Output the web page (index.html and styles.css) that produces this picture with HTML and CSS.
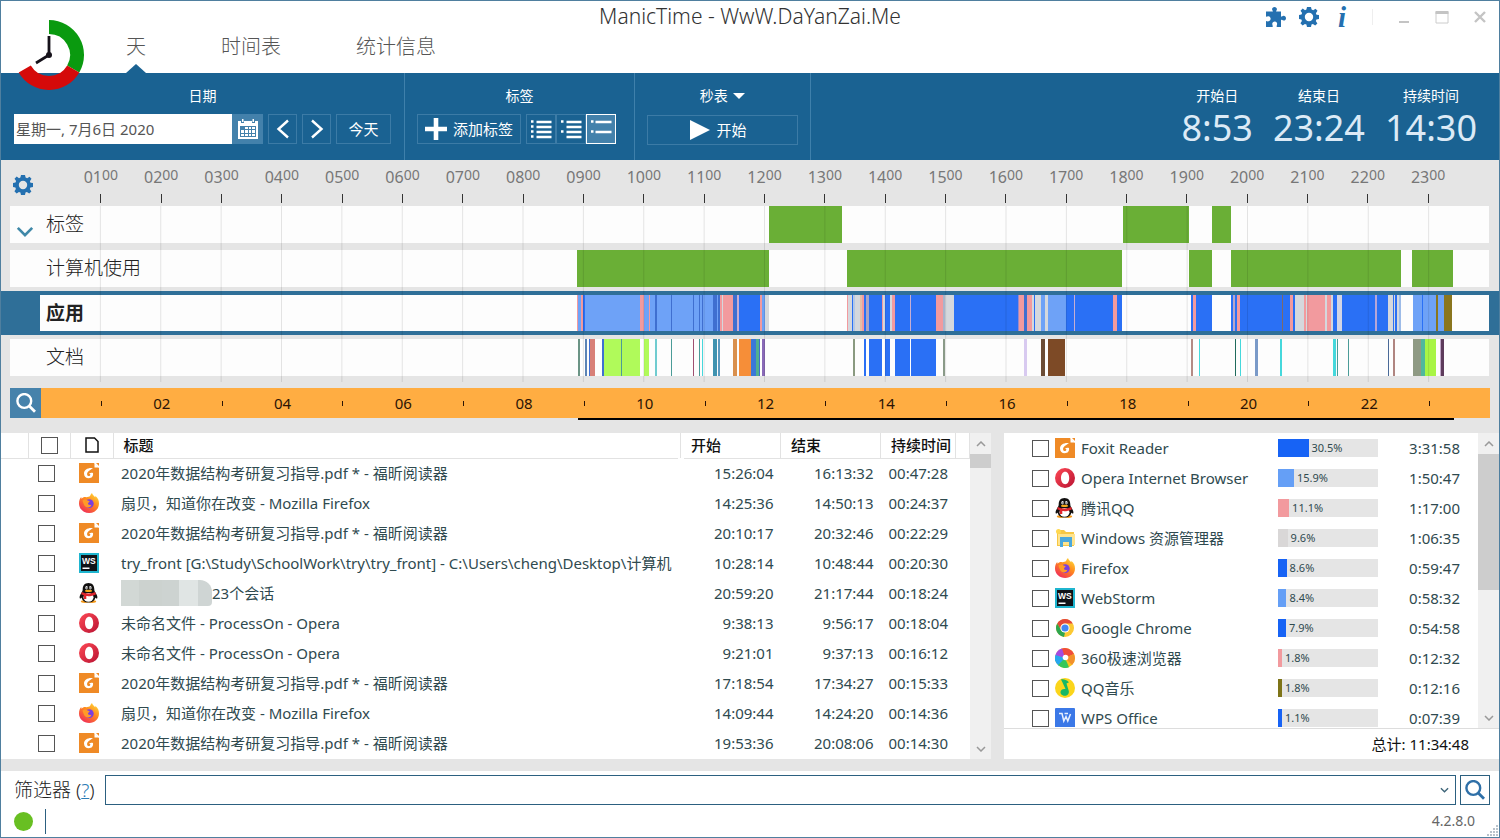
FILE: index.html
```html
<!DOCTYPE html>
<html lang="zh-CN">
<head>
<meta charset="utf-8">
<title>ManicTime</title>
<link rel="stylesheet" href="styles.css">
</head>
<body>
<svg class="defs" aria-hidden="true">
  <linearGradient id="g-opera" x1="0" y1="0" x2="1" y2="1"><stop offset="0" stop-color="#ff4a55"/><stop offset="1" stop-color="#b81232"/></linearGradient>
  <linearGradient id="g-fox" x1=".9" y1="0" x2=".2" y2="1"><stop offset="0" stop-color="#ffe03a"/><stop offset=".45" stop-color="#ff8a1e"/><stop offset="1" stop-color="#f0285c"/></linearGradient>
  <symbol id="i-gear" viewBox="0 0 20 20"><path fill="currentColor" fill-rule="evenodd" d="M8 0h4l.6 2.6 1.6.7L16.500 1.800l2 2-1.600 2.500.6 1.400L20 8v4l-2.600.6-.6 1.500 1.600 2.300-2.200 2.200-2.300-1.500-1.400.5L12 20H8l-.6-2.500-1.500-.6-2.300 1.600-2.200-2.200 1.500-2.300-.5-1.400L0 12V8l2.500-.5.600-1.400L1.500 3.800l2.200-2.200L6 3.200l1.400-.6zM10 5.800a4.200 4.200 0 1 0 0 8.400 4.200 4.200 0 0 0 0-8.400z"/></symbol>
  <symbol id="i-puzzle" viewBox="0 0 20 20"><path fill="currentColor" d="M0 4.500h6.500c.4 0 .5-.4.200-.8C5.300 2 6.500 0 8.500 0s3.200 2 1.800 3.700c-.3.400-.2.800.2.800H15v4.600c0 .5.4.7.900.4C17.600 8 20 9 20 11.200s-2.400 3-4.100 1.600c-.5-.3-.9-.1-.9.400V20h-4.300c0-1-.1-1.600.3-2.300.5-1.700-.4-3.200-2.200-3.200s-3 1.500-2.400 3.200c.3.700.3 1.300.3 2.300H0v-6c.9.200 1.700.6 2.700.3 2.700-.8 2.500-4.600-.2-5C1.500 9.200 1 9.600 0 9.700z"/></symbol>
  <symbol id="i-search" viewBox="0 0 20 20"><circle cx="8.300" cy="8" r="6.900" fill="none" stroke="currentColor" stroke-width="2.400"/><path d="M13 12.800l6 6" stroke="currentColor" stroke-width="2.900"/></symbol>
  <symbol id="i-chev" viewBox="0 0 10 6"><path d="M1 1l4 4 4-4" fill="none" stroke="currentColor" stroke-width="1.500"/></symbol>
  <symbol id="foxit" viewBox="0 0 20 20"><path fill="#ef8a26" d="M0 0h15l5 5v15H0z"/><path fill="#fff" d="M15.500 0v4.500H20L15.500 0z"/><path fill="#ef8a26" d="M17 0h3v3z"/><path fill="#fff" d="M14 5C9 4.400 5 6.500 5 10.500c0 3 2 4.700 4.700 4.700 3.200 0 4.800-2 4.300-5.200-1.600-.3-2.800-.2-4 .4.800.1 1.400.500 1.300 1.300-.1 1-1 1.500-1.900 1.300-1-.2-1.400-1.200-1.300-2.200C8.300 8.300 11.200 7.300 14 5z"/></symbol>
  <symbol id="opera" viewBox="0 0 20 20"><path fill="url(#g-opera)" fill-rule="evenodd" d="M10 0a10 10 0 1 0 0 20 10 10 0 0 0 0-20zm.2 3.800c2.400 0 4 2.600 4 6.200s-1.600 6.200-4 6.200-4.200-2.600-4.200-6.200 1.800-6.200 4.200-6.200z"/></symbol>
  <symbol id="firefox" viewBox="0 0 20 20"><path fill="url(#g-fox)" d="M13 0c.4 2 2 2.800 3.200 4.300.3-.6.200-1.100 0-1.600C19 4.800 20 7.500 20 10.500 20 16 15.700 20 10.200 20S0 16 0 10.500c0-2.600.8-5 2.200-6.500l.4 1.700C3.700 4.300 5.600 3.700 7.200 4.200 8.800 4 10.500 3.800 11 3c.5-1 .9-2 2-3z"/><circle cx="10.300" cy="10.600" r="4.400" fill="#7a3fe0"/><path fill="#ff9a28" d="M3.500 7.500c2-1.800 4-1 5.500.2l1.600.4c-.2 1.300-1.100 1.500-1.600 2.200-.2 1.600 1.500 2 3.400 1.400-.4 2.400-3.200 3.300-5.300 2.300C5 13 4.300 10 3.500 7.500z"/></symbol>
  <symbol id="webstorm" viewBox="0 0 20 20"><path fill="#1fb5cf" d="M0 0h20v20H0z"/><path fill="#101318" d="M2 2h16v16H2z"/><text x="3" y="10.500" font-size="8.500" font-weight="700" font-family="Liberation Sans" fill="#fff">WS</text><path fill="#fff" d="M3.500 14.500h7V16h-7z"/></symbol>
  <symbol id="qq" viewBox="0 0 20 20"><ellipse cx="5.800" cy="18.600" rx="4" ry="1.400" fill="#f59a1b"/><ellipse cx="13.200" cy="18.600" rx="4" ry="1.400" fill="#f59a1b"/><path fill="#12100f" d="M9.500 0c4 0 5.800 2.800 5.800 6.200 0 1.500.4 2.300 1.500 4 1.500 2.300 2 4 1.300 5.200-.5.600-1.300-.4-1.700-1-.7 3.200-3 5-6.900 5s-6.200-1.800-6.900-5c-.4.600-1.200 1.600-1.700 1-.7-1.200-.2-2.900 1.300-5.200 1.100-1.700 1.500-2.500 1.500-4C3.700 2.800 5.500 0 9.500 0z"/><ellipse cx="9.500" cy="14.300" rx="5" ry="4.400" fill="#fff"/><path fill="#e0252d" d="M2.800 9c4.400 2 9 2 13.400 0l.8 2.200c-3.200 1.800-6.500 2.200-9.700 1.900v3H4.800v-3.900l-2.600-1z"/><ellipse cx="7.600" cy="4.800" rx="1.300" ry="1.800" fill="#fff"/><ellipse cx="11.300" cy="4.800" rx="1.300" ry="1.800" fill="#fff"/><circle cx="8" cy="5" r=".7"/><circle cx="11" cy="5" r=".7"/><ellipse cx="9.500" cy="7.900" rx="3.500" ry="1.100" fill="#f5a81b"/></symbol>
  <symbol id="explorer" viewBox="0 0 20 20"><path fill="#f6c744" d="M2 2h7l2 2h8v14H2z"/><path fill="#ffe48e" d="M3 6h17v11H3z"/><path fill="#4ba8dc" d="M5 9h12v10h-3v-5H8v5H5z"/><circle cx="3.500" cy="3.500" r="2.500" fill="#ffd84f"/></symbol>
  <symbol id="chrome" viewBox="0 0 20 20"><circle cx="10" cy="10" r="9" fill="#fcc934"/><path fill="#e4483b" d="M2.200 5.500a9 9 0 0 1 15.600 0H10a4.500 4.500 0 0 0-4 6.600z"/><path fill="#2da64f" d="M2.200 5.500L6 12.100c.8 1.400 2.200 2.400 4 2.400l-1 4.400A9 9 0 0 1 2.200 5.500z"/><circle cx="10" cy="10" r="4.600" fill="#fff"/><circle cx="10" cy="10" r="3.600" fill="#4387f4"/></symbol>
  <symbol id="b360" viewBox="0 0 20 20"><circle cx="10" cy="10" r="10" fill="#f9c31c"/><path fill="#f04c3c" d="M10 10L6 .9A10 10 0 0 1 19 6z"/><path fill="#f2902c" d="M10 10l9-4a10 10 0 0 1-2 11z"/><path fill="#a44be0" d="M10 10L.3 7.500A10 10 0 0 1 7 .500z"/><path fill="#26a7ef" d="M10 10l-6 8A10 10 0 0 1 .4 7z"/><path fill="#35c75a" d="M10 10l4 9.200A10 10 0 0 1 3.200 17z"/><circle cx="10.500" cy="9.500" r="2.800" fill="#fff"/></symbol>
  <symbol id="qqmusic" viewBox="0 0 20 20"><circle cx="10" cy="10" r="10" fill="#fbd51b"/><path fill="#15b866" d="M6 1.500c2.500-.5 5 0 8 2.800L11.500 5.500l2.300 7.500c.5 3-1.500 4.800-4 4.800S5.300 16 5.500 14c.3-2.200 2.300-3.500 5-3L7.500 4.500z"/></symbol>
  <symbol id="wps" viewBox="0 0 20 20"><path fill="#3b78e7" d="M0 1a1 1 0 0 1 1-1h18a1 1 0 0 1 1 1v19H0z"/><path d="M4 5.500h3L8.800 13l2.200-4.500L12.800 13l2.700-7M9.500 5.500H13" fill="none" stroke="#e8f0ff" stroke-width="1.500"/></symbol>
</svg>

<div class="app">
  <header class="header">
    <svg class="logo" viewBox="0 0 70 70" aria-label="ManicTime"><path d="M35 7a28 28 0 0 1 24.250 42" fill="none" stroke="#0a9a0f" stroke-width="14"/><path d="M59.250 49A28 28 0 0 1 10.750 49" fill="none" stroke="#d50a0a" stroke-width="14"/><path d="M35 16v19L22 43" fill="none" stroke="#16121a" stroke-width="2.800"/><circle cx="35" cy="35" r="3" fill="#16121a"/></svg>
    <nav class="tabs">
      <a class="tab tab-active" href="#day">天</a>
      <a class="tab" href="#timesheet">时间表</a>
      <a class="tab" href="#stats">统计信息</a>
    </nav>
    <h1 class="title">ManicTime - WwW.DaYanZai.Me</h1>
    <div class="winbar">
      <button class="ib" aria-label="插件"><svg><use href="#i-puzzle"/></svg></button>
      <button class="ib" aria-label="设置"><svg><use href="#i-gear"/></svg></button>
      <button class="ib info" aria-label="关于">i</button>
      <span class="sep"></span>
      <button class="wb" aria-label="最小化"><svg viewBox="0 0 14 14"><path d="M2 12h10" stroke="#c4c4c4" stroke-width="2"/></svg></button>
      <button class="wb" aria-label="最大化"><svg viewBox="0 0 14 14"><path d="M1 2v11h12V2" fill="none" stroke="#ccc"/><path d="M.5 2.500h13" stroke="#c4c4c4" stroke-width="3"/></svg></button>
      <button class="wb" aria-label="关闭"><svg viewBox="0 0 14 14"><path d="M2 2l10 10M12 2L2 12" stroke="#c4c4c4" stroke-width="2.400"/></svg></button>
    </div>
  </header>

  <section class="toolbar">
    <div class="group group-date">
      <label class="gl" for="date">日期</label>
      <div class="controls">
        <div class="datebox"><input id="date" type="text" value="星期一, 7月6日 2020"><button class="cal" aria-label="日历"><svg viewBox="0 0 20 20"><path fill="#fff" fill-rule="evenodd" d="M0 2h3v2h3V2h8v2h3V2h3v18H0zm2 5v11h16V7z"/><path fill="#fff" d="M4 0h1.500v3H4zM14.500 0H16v3h-1.500zM7 8h3v2H7zm4 0h2v2h-2zm3 0h3v2h-3zM3 11h3v3H3zm4 0h3v3H7zm4 0h2v3h-2zm3 0h3v3h-3zM3 15h3v2H3zm4 0h3v2H7zm4 0h2v2h-2zm3 0h3v2h-3z"/></svg></button></div>
        <button class="tb sq" aria-label="前一天"><svg viewBox="0 0 14 20"><path d="M12 1.500L2.500 10l9.500 8.500" fill="none" stroke="#fff" stroke-width="2.400"/></svg></button>
        <button class="tb sq" aria-label="后一天"><svg viewBox="0 0 14 20"><path d="M2 1.500l9.500 8.500L2 18.500" fill="none" stroke="#fff" stroke-width="2.400"/></svg></button>
        <button class="tb today">今天</button>
      </div>
    </div>
    <div class="group group-tags">
      <span class="gl">标签</span>
      <div class="controls">
        <button class="tb add"><svg viewBox="0 0 22 22"><path d="M11 0v22M0 11h22" stroke="#fff" stroke-width="4.600"/></svg>添加标签</button>
        <div class="views">
          <button class="tb" aria-label="详细"><svg viewBox="0 0 20 20"><path d="M5.500 3h15M5.500 8h15M5.500 13h15M5.500 18h15M0 2.500h2.500M0 7.500h2.500M0 12.500h2.500M0 17.500h2.500" stroke="#fff" stroke-width="2.400"/></svg></button>
          <button class="tb" aria-label="紧凑"><svg viewBox="0 0 20 20"><path d="M5.500 3h15M5.500 8h15M5.500 13h15M5.500 18h15M0 2.500h2.500M0 12.500h2.500" stroke="#fff" stroke-width="2.400"/></svg></button>
          <button class="tb view-on" aria-label="列表"><svg viewBox="0 0 20 20"><path d="M4.500 3h16M4.500 13h16M0 2.500h2.500M0 12.500h2.500" stroke="#fff" stroke-width="2.400"/></svg></button>
        </div>
      </div>
    </div>
    <div class="group group-watch">
      <span class="gl">秒表 <svg class="caret" viewBox="0 0 12 6"><path d="M0 0h12L6 6z" fill="#fff"/></svg></span>
      <div class="controls"><button class="tb start"><svg viewBox="0 0 20 20"><path d="M0 0l20 10L0 20z" fill="#fff"/></svg>开始</button></div>
    </div>
    <dl class="stats">
      <div><dt>开始日</dt><dd>8:53</dd></div>
      <div><dt>结束日</dt><dd>23:24</dd></div>
      <div><dt>持续时间</dt><dd>14:30</dd></div>
    </dl>
  </section>

  <section class="timeline">
    <div class="ruler">
      <button class="ib" aria-label="时间线设置"><svg><use href="#i-gear"/></svg></button>
      <div class="hours" id="hours"></div>
    </div>
    <div class="tracks">
      <div class="track"><div class="lane"><svg class="chart" id="c-tags"></svg><span class="lane-label"><svg class="expand"><use href="#i-chev"/></svg>标签</span></div></div>
      <div class="track"><div class="lane"><svg class="chart" id="c-usage"></svg><span class="lane-label">计算机使用</span></div></div>
      <div class="track track-on"><div class="lane"><svg class="chart" id="c-apps"></svg><span class="lane-label">应用</span></div></div>
      <div class="track"><div class="lane"><svg class="chart" id="c-docs"></svg><span class="lane-label">文档</span></div></div>
      <svg class="grid" id="grid"></svg>
    </div>
    <div class="overview">
      <button class="ov-search" aria-label="缩放"><svg><use href="#i-search"/></svg></button>
      <div class="ov-bar"><div class="ov-hours" id="ov-hours"></div><svg class="ov-line" viewBox="0 0 1449 2" preserveAspectRatio="none"><path d="M537 0h876v2H537z"/></svg></div>
    </div>
  </section>

  <main class="panels">
    <section class="panel details">
      <table class="events">
        <colgroup><col class="c0"><col class="c1"><col class="c2"><col><col class="c4"><col class="c4"><col class="c6"><col class="c7"></colgroup>
        <thead><tr><th></th><th class="hc"><input type="checkbox" aria-label="全选"></th><th class="hc"><svg class="page" viewBox="0 0 14 16"><path d="M1 1h8.500L13 4.500V15H1z" fill="none" stroke="#111" stroke-width="1.500"/></svg></th><th>标题</th><th>开始</th><th>结束</th><th>持续时间</th><th></th></tr></thead>
        <tbody>
          <tr><td></td><td><input type="checkbox" aria-label="选择"></td><td class="ic"><svg><use href="#foxit"/></svg></td><td>2020年数据结构考研复习指导.pdf * - 福昕阅读器</td><td>15:26:04</td><td>16:13:32</td><td>00:47:28</td><td></td></tr>
          <tr><td></td><td><input type="checkbox" aria-label="选择"></td><td class="ic"><svg><use href="#firefox"/></svg></td><td>扇贝，知道你在改变 - Mozilla Firefox</td><td>14:25:36</td><td>14:50:13</td><td>00:24:37</td><td></td></tr>
          <tr><td></td><td><input type="checkbox" aria-label="选择"></td><td class="ic"><svg><use href="#foxit"/></svg></td><td>2020年数据结构考研复习指导.pdf * - 福昕阅读器</td><td>20:10:17</td><td>20:32:46</td><td>00:22:29</td><td></td></tr>
          <tr><td></td><td><input type="checkbox" aria-label="选择"></td><td class="ic"><svg><use href="#webstorm"/></svg></td><td>try_front [G:\Study\SchoolWork\try\try_front] - C:\Users\cheng\Desktop\计算机</td><td>10:28:14</td><td>10:48:44</td><td>00:20:30</td><td></td></tr>
          <tr><td></td><td><input type="checkbox" aria-label="选择"></td><td class="ic"><svg><use href="#qq"/></svg></td><td><span class="masked"></span>23个会话</td><td>20:59:20</td><td>21:17:44</td><td>00:18:24</td><td></td></tr>
          <tr><td></td><td><input type="checkbox" aria-label="选择"></td><td class="ic"><svg><use href="#opera"/></svg></td><td>未命名文件 - ProcessOn - Opera</td><td>9:38:13</td><td>9:56:17</td><td>00:18:04</td><td></td></tr>
          <tr><td></td><td><input type="checkbox" aria-label="选择"></td><td class="ic"><svg><use href="#opera"/></svg></td><td>未命名文件 - ProcessOn - Opera</td><td>9:21:01</td><td>9:37:13</td><td>00:16:12</td><td></td></tr>
          <tr><td></td><td><input type="checkbox" aria-label="选择"></td><td class="ic"><svg><use href="#foxit"/></svg></td><td>2020年数据结构考研复习指导.pdf * - 福昕阅读器</td><td>17:18:54</td><td>17:34:27</td><td>00:15:33</td><td></td></tr>
          <tr><td></td><td><input type="checkbox" aria-label="选择"></td><td class="ic"><svg><use href="#firefox"/></svg></td><td>扇贝，知道你在改变 - Mozilla Firefox</td><td>14:09:44</td><td>14:24:20</td><td>00:14:36</td><td></td></tr>
          <tr><td></td><td><input type="checkbox" aria-label="选择"></td><td class="ic"><svg><use href="#foxit"/></svg></td><td>2020年数据结构考研复习指导.pdf * - 福昕阅读器</td><td>19:53:36</td><td>20:08:06</td><td>00:14:30</td><td></td></tr>
        </tbody>
      </table>
      <div class="scroll"><svg class="up"><use href="#i-chev"/></svg><div class="rail"><div class="thumb thumb-s"></div></div><svg><use href="#i-chev"/></svg></div>
    </section>

    <section class="panel summary">
      <div class="list-wrap">
        <ul class="apps">
          <li><label><input type="checkbox"><svg><use href="#foxit"/></svg>Foxit Reader</label><span class="bar"><i class="f-blue" style="width:30.5%"></i>30.5%</span><time>3:31:58</time></li>
          <li><label><input type="checkbox"><svg><use href="#opera"/></svg>Opera Internet Browser</label><span class="bar"><i class="f-sky" style="width:15.9%"></i>15.9%</span><time>1:50:47</time></li>
          <li><label><input type="checkbox"><svg><use href="#qq"/></svg>腾讯QQ</label><span class="bar"><i class="f-pink" style="width:11.1%"></i>11.1%</span><time>1:17:00</time></li>
          <li><label><input type="checkbox"><svg><use href="#explorer"/></svg>Windows 资源管理器</label><span class="bar"><i class="f-grey" style="width:9.6%"></i>9.6%</span><time>1:06:35</time></li>
          <li><label><input type="checkbox"><svg><use href="#firefox"/></svg>Firefox</label><span class="bar"><i class="f-blue" style="width:8.6%"></i>8.6%</span><time>0:59:47</time></li>
          <li><label><input type="checkbox"><svg><use href="#webstorm"/></svg>WebStorm</label><span class="bar"><i class="f-sky" style="width:8.4%"></i>8.4%</span><time>0:58:32</time></li>
          <li><label><input type="checkbox"><svg><use href="#chrome"/></svg>Google Chrome</label><span class="bar"><i class="f-blue" style="width:7.9%"></i>7.9%</span><time>0:54:58</time></li>
          <li><label><input type="checkbox"><svg><use href="#b360"/></svg>360极速浏览器</label><span class="bar"><i class="f-pink" style="width:1.8%"></i>1.8%</span><time>0:12:32</time></li>
          <li><label><input type="checkbox"><svg><use href="#qqmusic"/></svg>QQ音乐</label><span class="bar"><i class="f-olive" style="width:1.8%"></i>1.8%</span><time>0:12:16</time></li>
          <li><label><input type="checkbox"><svg><use href="#wps"/></svg>WPS Office</label><span class="bar"><i class="f-blue" style="width:1.1%"></i>1.1%</span><time>0:07:39</time></li>
        </ul>
        <div class="scroll"><svg class="up"><use href="#i-chev"/></svg><div class="rail"><div class="thumb thumb-l"></div></div><svg><use href="#i-chev"/></svg></div>
      </div>
      <p class="total">总计: 11:34:48</p>
    </section>
  </main>

  <form class="filter">
    <span class="filter-label"><label for="filter">筛选器</label> (<a href="#help">?</a>)</span>
    <div class="combo"><select id="filter"><option></option></select><svg><use href="#i-chev"/></svg></div>
    <button class="find" type="button" aria-label="搜索"><svg><use href="#i-search"/></svg></button>
  </form>
  <footer class="status">
    <span class="dot"></span><span class="bar-line"></span><span class="version">4.2.8.0</span>
    <svg class="grip" viewBox="0 0 12 12"><path d="M9 1h2M6 4h2M9 4h2M3 7h2M6 7h2M9 7h2M0 10h2M3 10h2M6 10h2M9 10h2" stroke="#b9c3cc" stroke-width="2"/></svg>
  </footer>
</div>
<script src="script.js"></script>
</body>
</html>
```
FILE: styles.css
```css
* { box-sizing: border-box; }
body {
  margin: 0;
  font: 15px/20px "Noto Sans", "Noto Sans CJK SC", sans-serif;
  color: #2f4a4f;
  background: #fff;
}
button, input, select { font: inherit; color: inherit; margin: 0; padding: 0; border: 0; background: none; border-radius: 0; }
h1, p, dl, dd, ul { margin: 0; padding: 0; }
.defs { position: absolute; width: 0; height: 0; visibility: hidden; }
.app { min-height: 100vh; border: 1px solid #4f7f9f; display: flex; flex-direction: column; }

input[type="checkbox"] { appearance: none; width: 17px; height: 17px; border: 1px solid #555; background: #fff; display: block; flex: none; }

/* header */
.header { position: relative; height: 72px; display: grid; grid-template-columns: 1fr auto 1fr; flex: none; }
.logo { position: absolute; left: 13px; top: 19px; width: 70px; height: 70px; z-index: 2; }
.tabs { display: flex; gap: 75px; padding: 31px 0 0 125px; align-items: stretch; }
.tab { color: #555; font-size: 20px; line-height: 30px; font-weight: 300; text-decoration: none; white-space: nowrap; display: flex; flex-direction: column; align-items: center; justify-content: space-between; }
.tab-active::after { content: ""; border: 10px solid transparent; border-top: 0; border-bottom: 9px solid #1a6292; }
.title { font-size: 21px; line-height: 24px; font-weight: 300; color: #333; padding-top: 3px; }
.winbar { display: flex; justify-content: flex-end; align-items: center; height: 32px; padding-right: 12px; }
.ib { color: #2470b0; width: 20px; height: 20px; }
.ib svg { width: 20px; height: 20px; display: block; }
.winbar .ib { margin-right: 13px; }
.info { font: italic 700 29px/20px "Liberation Serif", serif; }
.sep { width: 1px; height: 16px; background: #eee; margin: 0 24px 0 7px; }
.wb { width: 14px; height: 14px; margin-left: 24px; }
.sep + .wb { margin-left: 0; }
.wb svg { display: block; width: 14px; height: 14px; }

/* toolbar */
.toolbar { background: #1a6292; color: #fff; display: flex; height: 87px; flex: none; }
.group { border-right: 1px solid #3f80ab; padding: 13px 12px 0 12px; }
.group-date { width: 404px; padding: 13px 13px 0 13px; }
.group-tags { width: 230px; }
.group-watch { width: 176px; }
.gl { display: block; text-align: center; font-size: 14px; line-height: 20px; }
.caret { width: 12px; height: 6px; margin: 0 0 2px 2px; }
.controls { display: flex; gap: 5px; margin-top: 8px; height: 30px; }
.group-watch .controls { margin-top: 9px; }
.datebox { display: flex; flex: 1; min-width: 0; }
.datebox input { flex: 1; min-width: 0; background: #fff; color: #555; padding-left: 2px; }
.cal { width: 31px; background: #4381ab; display: grid; place-items: center; flex: none; }
.cal svg { width: 20px; height: 20px; }
.tb { border: 1px solid #3c7ba6; color: #fff; display: flex; align-items: center; justify-content: center; flex: none; }
.sq { width: 29px; }
.sq svg { width: 14px; height: 20px; }
.today { width: 55px; }
.add { width: 104px; gap: 6px; white-space: nowrap; }
.add svg { width: 22px; height: 22px; flex: none; }
.views { display: flex; }
.views .tb { width: 30px; }
.views svg { width: 20px; height: 20px; overflow: visible; }
.views .view-on { background: #4381ab; border-color: #fff; }
.start { flex: 1; gap: 6px; padding-right: 8px; }
.start svg { width: 20px; height: 20px; }
.stats { margin-left: auto; padding: 13px 22px 0 0; display: flex; gap: 20px; text-align: center; }
.stats dt { font-size: 14px; line-height: 20px; }
.stats dd { font-size: 36px; line-height: 44px; color: #dceaf6; }

/* timeline */
.timeline { background: #e5e5e5; flex: none; height: 273px; display: flex; flex-direction: column; }
.ruler { display: flex; height: 46px; padding: 0 10px 0 12px; }
.ruler .ib { margin: 15px 7px 0 0; }
.hours, .ov-hours { flex: 1; display: grid; grid-template-columns: repeat(23, 1fr); padding: 0 2.083%; }
.hour { display: flex; flex-direction: column; align-items: center; color: #777; font-size: 16px; padding-top: 7px; }
.hour span { white-space: nowrap; }
.hour sup { font-size: 14px; line-height: 0; vertical-align: 3px; }
.hour::after { content: ""; width: 1px; height: 9px; background: #333; margin-top: 7px; }
.tracks { position: relative; display: flex; flex-direction: column; gap: 7px; padding-bottom: 6px; }
.track { padding: 0 10px 0 9px; }
.lane { background: #fdfdfd; height: 37px; display: grid; }
.track-on { background: #2f6f98; padding: 4px 10px 4px 39px; margin: -3px 0; }
.track-on .lane { height: 36px; }
.chart, .lane-label { grid-area: 1 / 1; }
.chart { width: calc(100% - 30px); height: 100%; margin-left: 30px; display: block; }
.lane-label { color: #222; font-size: 19px; line-height: 36px; font-weight: 300; padding-left: 36px; position: relative; }
.track-on .lane-label { padding-left: 6px; font-weight: 700; }
.track-on .chart { width: 100%; margin-left: 0; }
.expand { position: absolute; left: 6px; top: 20px; width: 18px; height: 11px; color: #3f88a8; }
.grid { position: absolute; left: 39px; top: 0; width: calc(100% - 49px); height: 100%; pointer-events: none; }
.overview { display: flex; padding: 0 9px; margin-top: 6px; }
.ov-search { width: 31px; height: 30px; background: #4682ab; color: #fff; display: grid; place-items: center; }
.ov-search svg { width: 20px; height: 20px; }
.ov-bar { flex: 1; }
.ov-hours { background: #ffad42; height: 30px; align-items: center; justify-items: center; color: #2b1405; }
.ov-hours i { width: 1px; height: 5px; background: #2b1405; }
.ov-line { display: block; width: 100%; height: 2px; }

/* panels */
.panels { display: flex; gap: 13px; background: #e5e5e5; padding-bottom: 12px; flex: 1; }
.panel { background: #fff; display: flex; min-width: 0; }
.details { flex: 2; }
.events { flex: 1; min-width: 0; table-layout: fixed; border-collapse: collapse; width: 100%; align-self: flex-start; }
.c0 { width: 27px; } .c1 { width: 42px; } .c2 { width: 43px; } .c4 { width: 100px; } .c6 { width: 75px; } .c7 { width: 14px; }
.events th { height: 25px; padding: 0 0 0 10px; text-align: left; color: #111; font-weight: 500; font-size: 15px; border-right: 1px solid #e2e2e2; border-bottom: 1px solid #e2e2e2; white-space: nowrap; }
.events th:first-child, .events th:last-child { padding: 0; }
.events .hc { padding: 0; }
.hc input, .page { margin: 0 auto; display: block; }
.page { width: 14px; height: 16px; }
.events td { height: 30px; padding: 0 0 0 8px; white-space: nowrap; overflow: hidden; }
.events td:first-child { padding: 0; }
.events td:nth-child(2) { padding-left: 10px; }
.events td:nth-child(3) { padding-left: 9px; }
.events td:nth-child(4) { text-overflow: clip; border-right: 6px solid transparent; }
.events td:nth-child(5), .events td:nth-child(6) { text-align: right; padding-right: 7px; }
.events td:nth-child(8) { padding: 0; }
.ic svg { display: block; width: 20px; height: 20px; }
.masked { display: inline-block; width: 91px; height: 26px; margin: -8px 0 -4px; vertical-align: middle; border-radius: 0 12px 4px 0; background: linear-gradient(90deg, #d2d8d5 0 20%, #ccd2cf 20% 45%, #cdd3d1 45% 64%, #e0e5e4 64% 85%, #cfd5d4 85%); }
.scroll { width: 21px; background: #f0f0f0; display: flex; flex-direction: column; align-items: center; padding: 8px 0 7px; color: #999; flex: none; }
.scroll > svg { width: 10px; height: 6px; flex: none; }
.scroll .up { transform: rotate(180deg); }
.rail { flex: 1; width: 100%; padding: 7px 0; }
.thumb { background: #cdcdcd; }
.thumb-s { height: 14px; }
.thumb-l { height: 136px; }
.summary { flex: 1; flex-direction: column; }
.list-wrap { display: flex; height: 294px; border-bottom: 1px solid #ddd; overflow: hidden; flex: 1 0 auto; }
.apps { list-style: none; flex: 1; height: 294px; overflow: hidden; min-width: 0; }
.apps li { height: 30px; display: flex; align-items: center; padding: 0 18px 0 28px; }
.apps label { flex: 1; display: flex; align-items: center; white-space: nowrap; }
.apps label svg { width: 20px; height: 20px; margin: 0 6px; flex: none; }
.bar { width: 100px; height: 18px; background: #e5e5e5; display: flex; align-items: center; gap: 3px; font-size: 11px; }
.bar i { height: 100%; min-width: 4px; }
.f-blue { background: #1763f5; } .f-sky { background: #659ff6; } .f-pink { background: #f29a9e; } .f-grey { background: #d9d7d7; } .f-olive { background: #7e7418; }
.apps time { width: 82px; text-align: right; }
.total { color: #111; text-align: right; padding: 5px 30px 5px 0; }

/* filter and status */
.filter { display: flex; height: 34px; align-items: center; padding: 3px 9px 0 13px; flex: none; }
.filter-label { width: 91px; font-size: 19px; line-height: 30px; font-weight: 300; color: #222; white-space: nowrap; }
.filter-label a { color: #2b7bb5; }
.combo { flex: 1; display: grid; align-items: center; height: 30px; border: 1px solid #2c6080; }
.combo select { appearance: none; grid-area: 1 / 1; width: 100%; height: 100%; }
.combo svg { grid-area: 1 / 1; justify-self: end; width: 9px; height: 6px; margin-right: 6px; color: #3d6478; pointer-events: none; }
.find { width: 30px; height: 30px; margin-left: 4px; border: 1px solid #2c6080; color: #2f70a8; display: grid; place-items: center; }
.find svg { width: 20px; height: 20px; }
.status { display: flex; align-items: center; height: 32px; padding-left: 13px; color: #666; flex: none; }
.dot { width: 19px; height: 19px; border-radius: 50%; background: #68bf22; }
.bar-line { width: 1px; height: 25px; background: #2c6080; margin-left: 12px; }
.version { margin-left: auto; font-size: 14px; }
.grip { width: 12px; height: 12px; margin-left: 12px; align-self: flex-end; }
```
FILE: script.js
```js
const B = '#2a70f5', S = '#6ea2f7', P = '#f29a9e', G = '#d5d8dd', L = '#b0fa5a', V = '#6aaf36', N = '#8a761e', D = '#3f6fd0', C = '#45d8dc', T = '#4b9c98', W = '#5b83b5';

// Each segment is [start, end, colour] on an axis that runs from 40 to 1489.
const charts = {
  'c-tags': [[769, 842, V], [1123, 1189, V], [1212, 1231, V]],
  'c-usage': [[577, 769, V], [847, 1122, V], [1189, 1212, V], [1231, 1401, V], [1412, 1453, V]],
  'c-apps': [
    [577, 769, S], [577, 578, P], [581, 583, P], [583, 585, B], [640, 644, P], [649, 650, P], [655, 657, D], [671, 672, D],
    [693, 694, D], [699, 700, D], [702, 703, D], [713, 717, D], [718, 720, D], [720, 733, P], [722, 723, G], [733, 737, D],
    [737, 739, '#c6aed2'], [739, 760, B], [760, 762, P], [765, 769, G],
    [847, 1122, B], [847, 848, P], [848, 852, G], [853, 855, '#b5c8e4'], [855, 860, G], [860, 862, '#e5bfa8'], [862, 864, P],
    [866, 869, '#a9a5c6'], [882, 883, P], [883, 885, G], [890, 892, G], [892, 895, P], [910, 911, '#c6aed2'], [936, 943, P],
    [943, 945, '#a8b4cc'], [945, 954, G], [1018, 1019, '#9b8ac8'], [1019, 1024, P], [1024, 1027, D], [1027, 1032, P],
    [1032, 1034, G], [1035, 1041, G], [1041, 1045, S], [1045, 1048, G], [1048, 1066, S], [1074, 1075, '#c6aed2'], [1113, 1117, P],
    [1191, 1212, B], [1193, 1196, P], [1231, 1295, B], [1233, 1235, '#b7a6c8'], [1237, 1240, P], [1282, 1283, '#7c6a6a'],
    [1290, 1293, P], [1295, 1304, G], [1304, 1331, P], [1306, 1307, G], [1325, 1327, G], [1331, 1333, G], [1333, 1388, B],
    [1337, 1342, '#d3d5e4'], [1375, 1377, '#b7a6d8'], [1388, 1393, G], [1393, 1397, B], [1394, 1395, G], [1397, 1399, G],
    [1399, 1401, '#9dbbe8'], [1413, 1444, S], [1422, 1423, B], [1436, 1438, N], [1444, 1452, N]
  ],
  'c-docs': [
    [578, 580, '#6b9485'], [585, 587, W], [589, 590, D], [590, 595, '#d88078'], [602, 604, D], [604, 640, L], [621, 622, T],
    [644, 649, L], [655, 657, '#70ccd0'], [671, 672, T], [693, 694, '#a05070'], [699, 700, T], [702, 703, C],
    [713, 717, '#3f93b0'], [718, 720, '#5b9ac0'], [733, 737, '#d9904e'], [739, 751, '#f68e38'], [751, 756, '#3a78d8'],
    [756, 759, '#50b090'], [759, 760, D], [762, 765, '#8a6ab8'], [853, 855, '#8a9a80'], [864, 866, B], [869, 882, B],
    [885, 890, B], [895, 910, B], [911, 936, B], [943, 945, '#8a9a88'], [1024, 1027, '#d8caf0'], [1041, 1045, '#6b4c35'],
    [1048, 1065, '#7d4a26'], [1191, 1193, '#b58a85'], [1199, 1200, C], [1235, 1236, '#1f6b5c'], [1240, 1241, C],
    [1255, 1258, '#7a9ac8'], [1280, 1282, C], [1333, 1336, C], [1337, 1338, T], [1348, 1349, T], [1388, 1389, '#4a6a98'],
    [1393, 1395, '#b08580'], [1413, 1421, '#8f9a84'], [1421, 1425, '#4fb89c'], [1425, 1436, '#a8f545'],
    [1440, 1441, '#c0a8c8'], [1441, 1444, '#5e3c5c']
  ]
};

for (const [id, segments] of Object.entries(charts)) {
  const svg = document.getElementById(id);
  svg.setAttribute('viewBox', '40 0 1449 36');
  svg.setAttribute('preserveAspectRatio', 'none');
  svg.innerHTML = segments
    .map(([a, b, fill]) => `<rect x="${a}" y="0" width="${b - a}" height="36" fill="${fill}"/>`)
    .join('');
}

const hours = Array.from({ length: 23 }, (_, i) => i + 1);
const pad = h => String(h).padStart(2, '0');

document.getElementById('hours').innerHTML =
  hours.map(h => `<div class="hour"><span>${pad(h)}<sup>00</sup></span></div>`).join('');
document.getElementById('ov-hours').innerHTML =
  hours.map(h => (h % 2 ? '<i></i>' : `<span>${pad(h)}</span>`)).join('');
document.getElementById('grid').innerHTML =
  hours.map(h => {
    const x = `${(h / 24) * 100}%`;
    return `<line x1="${x}" x2="${x}" y1="0" y2="100%" stroke="#000" stroke-opacity=".1"/>`;
  }).join('');
```
